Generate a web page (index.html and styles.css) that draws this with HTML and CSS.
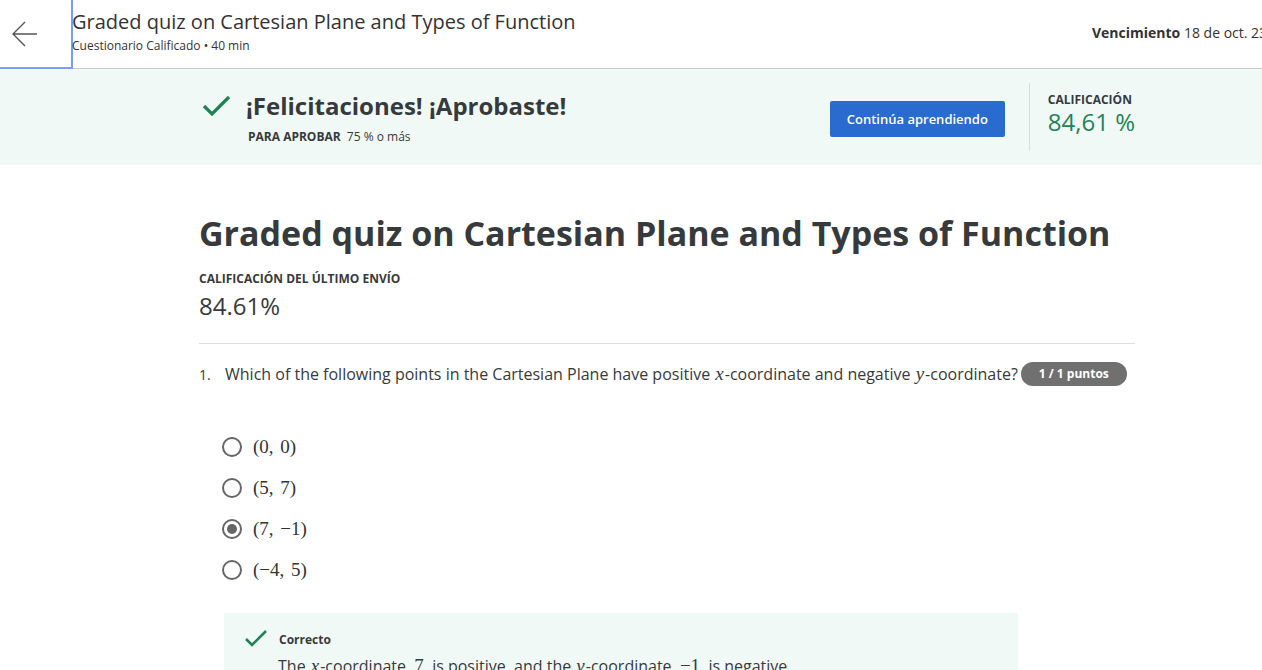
FILE: index.html
```html
<!DOCTYPE html>
<html lang="es">
<head>
<meta charset="utf-8">
<title>Graded quiz</title>
<link rel="stylesheet" href="styles.css">
</head>
<body>
<header class="topbar">
  <button class="back" aria-label="Volver">
    <svg width="26" height="26" viewBox="0 0 26 26"><path d="M25 13H2M13 1L1 13l12 12" fill="none" stroke="#555" stroke-width="1.4"/></svg>
  </button>
  <div class="top-title">
    <h1>Graded quiz on Cartesian Plane and Types of Function</h1>
    <p>Cuestionario Calificado • 40 min</p>
  </div>
  <div class="due"><b>Vencimiento</b> 18 de oct. 23:59 PDT</div>
</header>

<section class="banner">
  <div class="banner-inner">
    <svg class="check" width="30" height="24" viewBox="0 0 30 24"><path d="M2 12l8 8L27 3" fill="none" stroke="#1f8354" stroke-width="3.2"/></svg>
    <div class="banner-text">
      <h2>¡Felicitaciones! ¡Aprobaste!</h2>
      <p><b>PARA APROBAR</b> 75 % o más</p>
    </div>
    <button class="continue">Continúa aprendiendo</button>
    <div class="grade">
      <div class="label">CALIFICACIÓN</div>
      <div class="value">84,61 %</div>
    </div>
  </div>
</section>

<main class="content">
  <h1 class="quiz-title">Graded quiz on Cartesian Plane and Types of Function</h1>
  <div class="label">CALIFICACIÓN DEL ÚLTIMO ENVÍO</div>
  <div class="score">84.61%</div>
  <hr>
  <div class="question">
    <span class="num">1.</span>
    <span class="qtext">Which of the following points in the Cartesian Plane have positive <i class="m">x</i>-coordinate and negative <i class="m">y</i>-coordinate?</span>
    <span class="badge">1 / 1 puntos</span>
  </div>
  <ul class="options">
    <li><span class="radio"></span><span class="math">(0, 0)</span></li>
    <li><span class="radio"></span><span class="math">(5, 7)</span></li>
    <li><span class="radio checked"></span><span class="math">(7, −1)</span></li>
    <li><span class="radio"></span><span class="math">(−4, 5)</span></li>
  </ul>
  <div class="feedback">
    <div class="fb-head">
      <svg width="24" height="20" viewBox="0 0 24 20"><path d="M2 10l6 6L22 2" fill="none" stroke="#1f8354" stroke-width="2.6"/></svg>
      <b>Correcto</b>
    </div>
    <p>The <i class="m">x</i>-coordinate, <span class="mr">7</span>, is positive, and the <i class="m">y</i>-coordinate, <span class="mr">−1</span>, is negative.</p>
  </div>
</main>
</body>
</html>
```
FILE: styles.css
```css
* { box-sizing: border-box; }
html, body { margin: 0; padding: 0; overflow: hidden; }
body {
  font-family: "Open Sans", "Liberation Sans", sans-serif;
  color: #373a3c;
  background: #fff;
  width: 1262px;
  height: 670px;
}
.topbar {
  display: flex;
  align-items: flex-start;
  height: 69px;
  border-bottom: 1px solid #c8c8c8;
  white-space: nowrap;
}
.back {
  width: 73px;
  height: 69px;
  flex: none;
  background: #fff;
  border: none;
  border-right: 2px solid #7a9df5;
  border-bottom: 2px solid #7a9df5;
  padding: 0 0 0 12px;
  display: flex;
  align-items: center;
}
.top-title { flex: 1; padding-top: 8px; margin-left: -1px; }
.top-title h1 {
  margin: 0;
  font-size: 20px;
  font-weight: 400;
  line-height: 28px;
  color: #333;
}
.top-title p { margin: 2px 0 0; font-size: 12px; line-height: 16px; color: #333; }
.due {
  padding-top: 23px;
  font-size: 14px;
  color: #333;
  width: 170px;
  overflow: hidden;
  flex: none;
}
.due b { font-weight: 700; }
.banner {
  background: #f1f9f6;
  height: 96px;
}
.banner-inner {
  margin-left: 199px;
  width: 936px;
  height: 96px;
  display: flex;
  align-items: center;
}
.check { margin-left: 3px; margin-top: -22px; flex: none; }
.banner-text { margin-left: 14px; flex: 1; }
.banner-text h2 { margin: 0; font-size: 24px; line-height: 32px; font-weight: 700; color: #373a3c; }
.banner-text p { margin: 7px 0 0 2px; font-size: 12px; line-height: 16px; color: #373a3c; }
.banner-text p b { margin-right: 3px; }
.continue {
  background: #2a6bd0;
  color: #fff;
  border: none;
  border-radius: 2px;
  font-family: inherit;
  font-size: 13px;
  font-weight: 600;
  width: 175px;
  height: 36px;
  margin-top: 4px;
  flex: none;
}
.grade {
  margin-left: 24px;
  border-left: 1px solid #dcdcdc;
  height: 68px;
  padding: 9px 0 0 18px;
  flex: none;
  white-space: nowrap;
}
.grade .label { font-size: 12px; font-weight: 700; line-height: 16px; color: #373a3c; }
.grade .value { font-size: 24px; line-height: 28px; color: #1f8354; }
.content { margin-left: 199px; width: 936px; padding-top: 44px; }
.quiz-title {
  margin: 0;
  font-size: 34px;
  line-height: 48px;
  font-weight: 700;
  color: #373a3c;
}
.content > .label { margin-top: 14px; font-size: 12px; font-weight: 700; line-height: 16px; }
.score { font-size: 24px; line-height: 32px; margin-top: 3px; color: #373a3c; }
hr { border: none; border-top: 1px solid #ddd; margin: 21px 0 0; }
.question {
  display: flex;
  align-items: center;
  margin-top: 18px;
  height: 24px;
  white-space: nowrap;
}
.num { font-size: 14px; width: 26px; }
.qtext { font-size: 16px; color: #373a3c; }
.m { font-family: "Liberation Serif", "DejaVu Serif", serif; font-style: italic; font-size: 19px; padding: 0 1px; }
.mr { font-family: "Liberation Serif", "DejaVu Serif", serif; font-size: 19px; }
.badge {
  margin-left: 3px;
  background: #707070;
  color: #fff;
  font-size: 12px;
  font-weight: 700;
  border-radius: 12px;
  height: 24px;
  line-height: 24px;
  padding: 0 18px;
}
.options { list-style: none; margin: 40px 0 0 23px; padding: 0; }
.options li { display: flex; align-items: center; height: 41px; }
.radio {
  width: 20px;
  height: 20px;
  border: 2px solid #666;
  border-radius: 50%;
  flex: none;
  display: flex;
  align-items: center;
  justify-content: center;
}
.radio.checked::after {
  content: "";
  width: 10px;
  height: 10px;
  border-radius: 50%;
  background: #666;
}
.math {
  margin-left: 11px;
  font-family: "Liberation Serif", "DejaVu Serif", serif;
  font-size: 19px;
  color: #333;
  word-spacing: 2px;
}
.feedback {
  margin: 23px 0 0 25px;
  width: 794px;
  background: #f1f9f6;
  padding: 16px 0 0 20px;
  height: 80px;
}
.fb-head { display: flex; align-items: center; gap: 11px; }
.fb-head b { font-size: 12px; }
.feedback p { margin: 6px 0 0 34px; font-size: 16px; white-space: nowrap; }
```
